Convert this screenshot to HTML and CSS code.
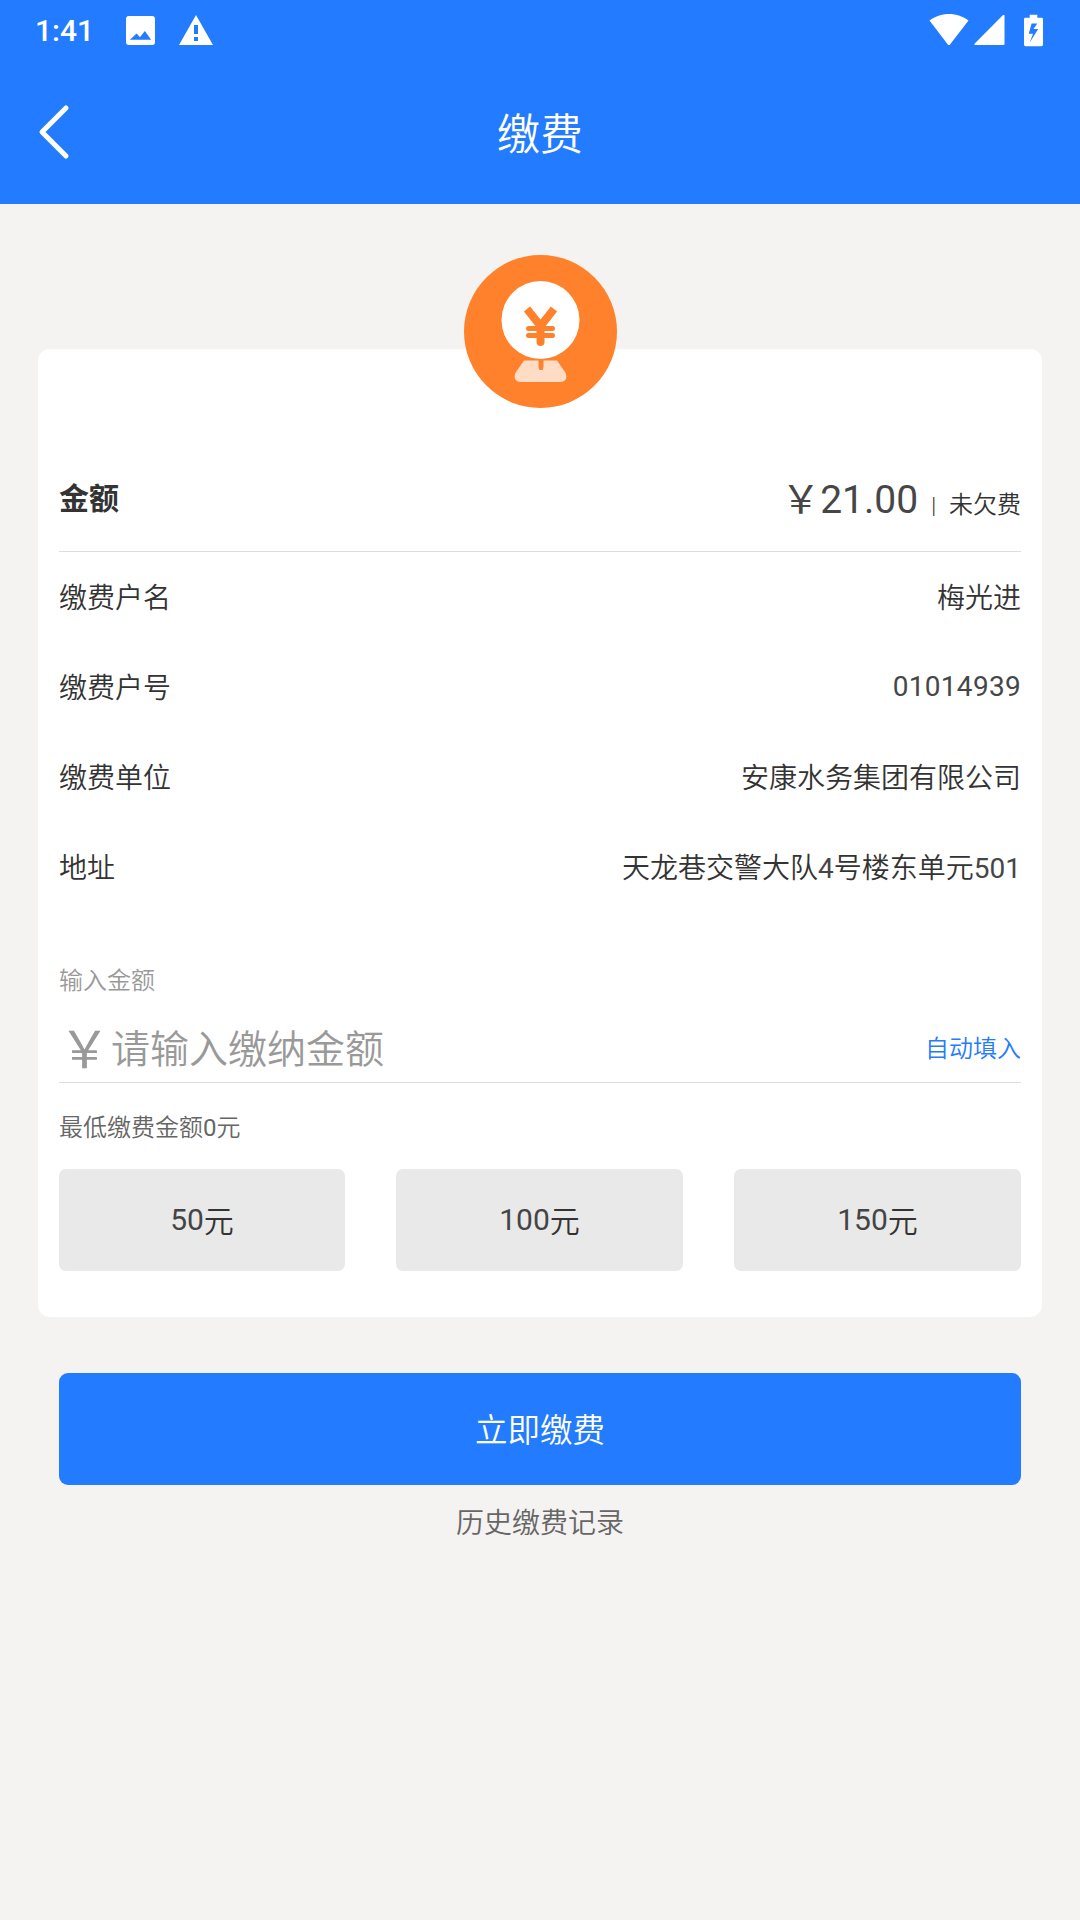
FILE: index.html
```html
<!DOCTYPE html>
<html lang="zh-CN">

<head>
  <meta charset="UTF-8">
  <meta name="viewport" content="width=device-width, initial-scale=1.0">
  <title>缴费</title>
  <link rel="stylesheet" href="styles.css">
</head>

<body>
  <div class="head">
    <div class="status">
      <span class="time">1:41</span>
      <svg class="st-pic" width="29" height="29" viewBox="0 0 30 30">
        <path fill="#fff" fill-rule="evenodd" d="M3 0h24a3 3 0 0 1 3 3v24a3 3 0 0 1-3 3H3a3 3 0 0 1-3-3V3a3 3 0 0 1 3-3zM4 24.500h22l-6.500-9-5 6.500-3.500-4z" />
      </svg>
      <svg class="st-warn" width="34" height="30" viewBox="0 0 34 30">
        <path fill="#fff" fill-rule="evenodd" d="M17 0L34 30H0zM15 10v9h4v-9zM15 22v4h4v-4z" />
      </svg>
      <span class="space"></span>
      <svg class="st-wifi" width="40" height="32" viewBox="0 0 40 32">
        <path fill="#fff" d="M20 0c7.500 0 14 2.500 19.500 6.500L21 30.500a1.500 1.500 0 0 1-2.200 0L.5 6.500C6 2.500 12.500 0 20 0z" />
      </svg>
      <svg class="st-cell" width="31" height="30" viewBox="0 0 31 30">
        <path fill="#fff" d="M29 0h1.500v29a1 1 0 0 1-1 1H1a.8.8 0 0 1-.5-1.300z" />
      </svg>
      <svg class="st-batt" width="19" height="33" viewBox="0 0 20 33">
        <path fill="#fff" fill-rule="evenodd" d="M6 0h8v3h4.500a1.500 1.500 0 0 1 1.500 1.500v27a1.500 1.500 0 0 1-1.500 1.500h-17A1.500 1.500 0 0 1 0 31.500v-27A1.500 1.500 0 0 1 1.500 3H6zM8 9l-3 11h4.500L6 29l9-14h-5l4-6z" />
      </svg>
    </div>
    <div class="nav">
      <svg class="back" width="34" height="56" viewBox="0 0 34 56">
        <path d="M29 4L5 28l24 24" fill="none" stroke="#fff" stroke-width="5" stroke-linecap="round" stroke-linejoin="round" />
      </svg>
      <h1>缴费</h1>
    </div>
  </div>

  <div class="main">
    <div class="card">
      <div class="logo">
        <svg width="153" height="153" viewBox="0 0 153 153">
          <circle cx="76.500" cy="76.500" r="76.500" fill="#ff812c" />
          <path fill="#ffdcc3" d="M60 105.500h33l8 11.500c3 5 1 10-5 10H57c-6 0-8-5-5-10z" />
          <path fill="#ff812c" d="M74.500 100h5v12l-1 3h-3l-1-3z" />
          <circle cx="76.500" cy="65" r="39" fill="#fff" />
          <g fill="none" stroke="#ff812c">
            <path stroke-width="8" stroke-linejoin="round" d="M63 54L76.500 71 90 54" />
            <path stroke-width="5" stroke-linecap="round" d="M64.500 73.500h24M64.500 80.500h24" />
            <path stroke-width="8" stroke-linecap="round" d="M76.500 72v15" />
          </g>
        </svg>
      </div>

      <div class="row-money">
        <b>金额</b>
        <span class="money"><span class="num">￥21.00</span><span class="bar">|</span><span class="owe">未欠费</span></span>
      </div>

      <div class="rows">
        <div class="row"><span>缴费户名</span><span>梅光进</span></div>
        <div class="row"><span>缴费户号</span><span class="digits">01014939</span></div>
        <div class="row"><span>缴费单位</span><span>安康水务集团有限公司</span></div>
        <div class="row"><span>地址</span><span>天龙巷交警大队<span class="n">4</span>号楼东单元<span class="n">501</span></span></div>
      </div>

      <div class="label">输入金额</div>
      <div class="input">
        <span class="yen">￥</span>
        <span class="holder">请输入缴纳金额</span>
        <span class="auto">自动填入</span>
      </div>
      <div class="low">最低缴费金额<span class="n">0</span>元</div>

      <div class="opts">
        <div class="opt"><span class="n">50</span>元</div>
        <div class="opt"><span class="n">100</span>元</div>
        <div class="opt"><span class="n">150</span>元</div>
      </div>
    </div>

    <div class="pay">立即缴费</div>
    <div class="history">历史缴费记录</div>
  </div>
</body>

</html>
```

FILE: styles.css
```css
* {
  box-sizing: border-box;
}

body {
  margin: 0;
  height: 1920px;
  overflow: hidden;
  background: #f4f3f2;
  font-family: Roboto, "Noto Sans CJK SC", sans-serif;
  font-weight: 350;
  color: #333;
}

/* latin digits stay regular, the cjk text is the lighter cut */
.n,
.digits,
.num {
  font-weight: 400;
  opacity: .9;
}

.low .n {
  opacity: 1;
}

/* HEADER */
.head {
  height: 204px;
  background: #237bff;
  color: #fff;
}

.status {
  height: 60px;
  padding: 0 37px 0 35px;
  display: flex;
  align-items: center;
}

.time {
  font-size: 30px;
  font-weight: 500;
  width: 91px;
}

.st-warn {
  margin-left: 24px;
}

.space {
  flex: 1;
}

.st-cell {
  margin-left: 5px;
}

.st-batt {
  margin-left: 19px;
}

.nav {
  height: 144px;
  padding: 0 0 0 37px;
  display: flex;
  align-items: center;
  position: relative;
}

.nav h1 {
  position: absolute;
  left: 0;
  right: 0;
  margin: -2px 0 0;
  text-align: center;
  font-size: 43px;
  font-weight: 350;
}

/* CARD */
.main {
  padding: 145px 38px 0;
}

.card {
  position: relative;
  height: 968px;
  padding: 0 21px 0 21px;
  background: #fff;
  border-radius: 12px;
}

.logo {
  position: absolute;
  top: -94px;
  left: 426px;
  height: 153px;
}

.row-money {
  height: 203px;
  padding-top: 92px;
  display: flex;
  justify-content: space-between;
  align-items: center;
  border-bottom: 1px solid #ddd;
}

.row-money b {
  font-size: 30px;
  font-weight: 700;
}

.money {
  display: flex;
  align-items: baseline;
}

.num {
  font-size: 39px;
}

.bar {
  font-size: 22px;
  margin: 0 13px 0 13px;
}

.owe {
  font-size: 24px;
}

.rows {
  margin-top: -1px;
}

.row {
  height: 90px;
  display: flex;
  justify-content: space-between;
  align-items: center;
  font-size: 28px;
}

.digits {
  letter-spacing: .3px;
}

.label {
  margin-top: 50px;
  font-size: 24px;
  color: #999;
}

.input {
  height: 78px;
  margin-top: 9px;
  padding-top: 5px;
  display: flex;
  align-items: center;
  border-bottom: 1px solid #ddd;
}

.yen {
  font-size: 51px;
  font-weight: 400;
  width: 52px;
  color: #999;
}

.holder {
  flex: 1;
  font-size: 39px;
  color: #999;
}

.auto {
  font-size: 24px;
  color: #237bff;
}

.low {
  margin-top: 25px;
  font-size: 24px;
  color: #666;
}

.opts {
  margin-top: 26px;
  display: grid;
  grid-template-columns: 286px 287px 287px;
  gap: 51px;
}

.opt {
  height: 102px;
  padding-bottom: 2px;
  display: flex;
  justify-content: center;
  align-items: center;
  background: #e9e9e9;
  border-radius: 7px;
  font-size: 30px;
}

.pay {
  height: 112px;
  margin: 56px 21px 0;
  padding-bottom: 3px;
  display: flex;
  justify-content: center;
  align-items: center;
  background: #237bff;
  border-radius: 9px;
  color: #fff;
  font-size: 32.500px;
}

.history {
  margin-top: 16px;
  text-align: center;
  font-size: 28px;
  color: #666;
}
```
